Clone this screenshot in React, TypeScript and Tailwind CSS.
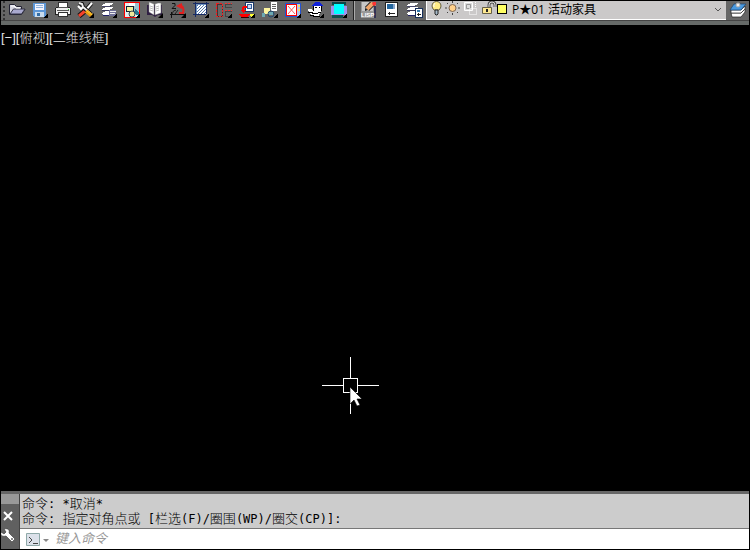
import type { ReactNode } from "react";

function Icon({ children }: { children: ReactNode }) {
  return (
    <svg width="23" height="18" viewBox="0 0 23 18" className="block shrink-0" shapeRendering="crispEdges" aria-hidden="true">
      {children}
    </svg>
  );
}

const Corner = () => <path d="M20 11v5h-5z" fill="#000" />;

function Sheets({ x = 0 }: { x?: number }) {
  return (
    <g transform={`translate(${x} 0)`}>
      <path d="M8 1h8v1h-1v1h-2v1H5V3h1V2h2z" fill="#fff" />
      <path d="M5 4h9v1H5z" fill="#446" />
      <path d="M8 5h8v1h-1v1h-2v1H5V7h1V6h2z" fill="#fff" />
      <path d="M5 8h9v1H5z" fill="#335" />
      <path d="M8 9h8v1h-1v1h-2v2H6v-1H5v-1h1v-1h2z" fill="#fff" />
      <path d="M6 13h8v1H6z" fill="#226" />
    </g>
  );
}

const tools: { name: string; art: ReactNode }[] = [
  {
    name: "打开",
    art: (
      <g shapeRendering="auto">
        <path d="M4.500 12.500v-10h5l2 2h5v3h3.500l-3.500 5z" fill="#d8d8e4" stroke="#223" />
        <path d="M5 12l3.500-5H20l-3.500 5z" fill="#a9a9cf" stroke="#334" />
        <path d="M6 4h3l2 2h4" fill="none" stroke="#fff" />
      </g>
    ),
  },
  {
    name: "保存",
    art: (
      <>
        <path d="M5 1h13v14H6l-1-1z" fill="#5c96d6" />
        <path d="M7 2h9v6H7z" fill="#f4f4ff" />
        <path d="M8 3h7v1H8zM8 5h7v1H8z" fill="#91b4dc" />
        <path d="M7 10h9v5H7z" fill="#c8dcef" />
        <path d="M9 11h3v3H9z" fill="#346ea6" />
        <Corner />
      </>
    ),
  },
  {
    name: "打印",
    art: (
      <>
        <path d="M7 0h10v6H7z" fill="#333" />
        <path d="M8 1h8v5H8z" fill="#fff" />
        <path d="M5 5h14v1h1v7H4V6h1z" fill="#222" />
        <path d="M5 6h14v6H5z" fill="#eee" />
        <path d="M7 5h10v1H7zM6 8h12v1H6z" fill="#555" />
        <path d="M7 10h10v5H7z" fill="#333" />
        <path d="M8 11h8v3H8z" fill="#fff" />
        <path d="M17 7h1v1h-1z" fill="#3b3" />
      </>
    ),
  },
  {
    name: "工具",
    art: (
      <g shapeRendering="auto">
        <path d="M17.500 1.500l-6 7" stroke="#111" strokeWidth="4" />
        <path d="M18 1l-6.500 7.500" stroke="#fff" strokeWidth="2" />
        <path d="M11 9l-6 5" stroke="#111" strokeWidth="5" />
        <path d="M11 9l-6 5" stroke="#f4422c" strokeWidth="3" />
        <path d="M5 1l3 1 1 3 8 7" fill="none" stroke="#111" strokeWidth="4" />
        <path d="M5 1l3 1 1 3 8 7" fill="none" stroke="#eee" strokeWidth="2" />
        <path d="M12 9l6 5" stroke="#e89a13" strokeWidth="4" />
        <path d="M13 9l5 4" stroke="#ffd633" />
        <path d="M4 4l3 3 2-2" fill="none" stroke="#fff" strokeWidth="2" />
        <Corner />
      </g>
    ),
  },
  {
    name: "图层",
    art: (
      <>
        <Sheets />
        <path d="M12 8h7v6h-7z" fill="#707098" />
        <path d="M13 9h6v1h-6zM13 11h5v1h-5z" fill="#eee" />
        <Corner />
      </>
    ),
  },
  {
    name: "图块",
    art: (
      <>
        <path d="M4.500 .5h15v15h-15z" fill="#e5efef" stroke="#f00" />
        <path d="M15 1h4v11l-6-4z" fill="#9cc4d0" />
        <path d="M6 4h8v6H6z" fill="#123" />
        <path d="M7 5h6v4H7z" fill="#f5f3a0" />
        <path d="M9 1h6v3H9z" fill="#fff" />
        <path d="M15 7l4 4v3l-5-3z" fill="#267b91" />
        <circle cx="12" cy="12" r="3" fill="#eee89a" stroke="#345" shapeRendering="auto" />
        <Corner />
      </>
    ),
  },
  {
    name: "图书",
    art: (
      <g shapeRendering="auto">
        <path d="M4 3v10h5l3 2 3-2h4V3z" fill="#302044" />
        <path d="M6 0l5 2v11l-5-3zM18 1h-3l-3 1v11l6-2z" fill="#fff" stroke="#777" strokeWidth=".5" />
        <path d="M7 4l3 1M7 6l3 1M7 8l3 1M13 5l3-1M13 7l3-1M13 9l3-1" stroke="#bbb" />
        <Corner />
      </g>
    ),
  },
  {
    name: "旋转",
    art: (
      <g shapeRendering="auto">
        <path d="M6 1.500h3v2l-3 3h4" fill="none" stroke="#111" />
        <path d="M13 3q6 1 4 8h-4" fill="none" stroke="#e22020" strokeWidth="2" />
        <path d="M10 4l6-3v6z" fill="#e22020" />
        <path d="M6 12q1-4 4-4M9 12l3-4" fill="none" stroke="#222" />
        <path d="M4 12.500h15M5.500 10v6" fill="none" stroke="#111" />
        <Corner />
      </g>
    ),
  },
  {
    name: "填充",
    art: (
      <>
        <path d="M7 2h10v10H7z" fill="#fff" />
        <path d="M7 5l3-3M7 8l6-6M7 11l9-9M9 12l8-8M12 12l5-5M15 12l2-2" stroke="#587baa" />
        <path d="M4 1.500h16M4 12.500h13M6.500 0v15M17.500 0v12" stroke="#172b64" />
        <path d="M7 2h10v1H7zM7 3h1v9H7z" fill="#6f94c0" />
        <Corner />
      </>
    ),
  },
  {
    name: "对齐",
    art: (
      <>
        <path d="M5.500 2.500h5v12h-5z" fill="none" stroke="#4c3030" />
        <path d="M4.500 1.500h6v13h-6z" fill="none" stroke="#f02020" strokeDasharray="2 1" />
        <path d="M19.500 2.500h-6v3h6M19.500 9.500h-6v5h4" fill="none" stroke="#444" />
        <path d="M13 1.500h7M13 8.500h7" stroke="#e33" strokeDasharray="2 1" />
        <Corner />
      </>
    ),
  },
  {
    name: "插入",
    art: (
      <>
        <path d="M10 0h9v10h-9z" fill="#193666" />
        <path d="M11 1h7v8h-7z" fill="#fff" />
        <path d="M12 2h5v5h-5z" fill="#355e9a" />
        <path d="M13 3h3v3h-3z" fill="#cbdaf6" />
        <path d="M12 4v2H9v2h2l-3 3-3-3h2V5l1-1z" fill="#f00" />
        <path d="M4 12h11l-2 3H6z" fill="#f00" />
        <path d="M6 15h8v1H6z" fill="#300" />
        <path d="M15 12h4l-3 3z" fill="#ff3" />
        <Corner />
      </>
    ),
  },
  {
    name: "特性",
    art: (
      <>
        <path d="M12 0h7v9h-7z" fill="#fff" />
        <path d="M12 0h1v9h-1zM14 2h4v1h-4zM14 4h4v1h-4zM14 6h4v1h-4z" fill="#666" />
        <path d="M6 6h6v6H6z" fill="#fff6a0" />
        <path d="M4 11h3v4H4zM11 10h4v3h-4z" fill="#6daab3" />
        <circle cx="13" cy="12" r="3" fill="none" stroke="#204b72" shapeRendering="auto" />
        <Corner />
      </>
    ),
  },
  {
    name: "裁剪",
    art: (
      <>
        <path d="M4.500 1.500h15v13h-15z" fill="#b4c6e8" stroke="#2453d0" />
        <path d="M5.500 2.500h10v11h-10z" fill="#fff" stroke="#f00" />
        <path d="M7 4l7 8M14 4l-7 8" stroke="#f15a5a" shapeRendering="auto" />
        <path d="M17 3h2v2h-2zM17 7h2v2h-2z" fill="#ffdc5a" />
        <Corner />
      </>
    ),
  },
  {
    name: "图层助手",
    art: (
      <>
        <path d="M11 0h5l3 4H8z" fill="#1022d8" />
        <path d="M9 4h9v5H9z" fill="#000" />
        <path d="M10 4h7v5h-7z" fill="#fff" />
        <path d="M11 5h2v1h-2zM15 5h1v1h-1z" fill="#000" />
        <path d="M4 7h3l2 2h8v2l-2 1v2H9l-4-3z" fill="#fff" />
        <path d="M4 10h5v1h5v-1h3v1h-3v1H8v-1H4zM6 13h4v1h6v1H9v-1H6z" fill="#000" />
        <Corner />
      </>
    ),
  },
  {
    name: "视口",
    art: (
      <>
        <path d="M5 0h14v3H5z" fill="#0d4748" />
        <path d="M4 4h16v9H4z" fill="#9e92ee" />
        <path d="M7 2h10v10H7z" fill="#0ff" />
        <path d="M5 13h11v3H5z" fill="#124b4c" />
        <Corner />
      </>
    ),
  },
];

const endTools: { name: string; art: ReactNode }[] = [
  {
    name: "LISP",
    art: (
      <>
        <path d="M4 0h15v16H4z" fill="#999" />
        <path d="M5 0h11v9H5z" fill="#c7c7c7" />
        <path d="M17 4h2v12h-2z" fill="#335" />
        <g shapeRendering="auto">
          <path d="M10 7l6-6" stroke="#222" strokeWidth="6" />
          <path d="M10 7l6-6" stroke="#eea56b" strokeWidth="4" />
          <path d="M16 0h3v3l-2 1-2-2z" fill="#f33" />
          <path d="M8 9l3-1-3-2z" fill="#222" />
        </g>
        <text x="4" y="15" className="fill-white font-['Liberation_Sans'] text-[6px] font-bold">LISP</text>
      </>
    ),
  },
  {
    name: "属性面板",
    art: (
      <>
        <path d="M5.500 .5h12v14h-12z" fill="#fff" stroke="#222" />
        <path d="M7 2h6v5H7z" fill="#24679e" />
        <path d="M13 2h2v5h-2z" fill="#8aa5ca" />
        <path d="M8 11h7v1H8zM9 10h1v3H9z" fill="#222" />
      </>
    ),
  },
  {
    name: "图层特性",
    art: (
      <>
        <Sheets x={-1} />
        <path d="M12.500 6.500h7v9h-7z" fill="#fff" stroke="#17305b" />
        <path d="M14 8h3v2h-3z" fill="#3477aa" />
        <path d="M14 12h4v1h-4zM15 11h1v3h-1z" fill="#222" />
      </>
    ),
  },
];

function ToolButton({ name, art }: { name: string; art: ReactNode }) {
  return (
    <button type="button" aria-label={name} className="w-[23px] shrink-0">
      <Icon>{art}</Icon>
    </button>
  );
}

function LayerCombo() {
  return (
    <div className="flex min-w-0 flex-1 items-start border-b border-l border-white bg-[#cbc9c9]">
      <svg width="81" height="18" viewBox="0 0 81 18" className="block shrink-0" aria-hidden="true">
        <path d="M7 9q-2-2-2-4c0-6 9-6 9 0q0 2-2 4z" fill="#ffec85" stroke="#655f45" />
        <path d="M8 2q-2 2-1 4" fill="none" stroke="#fff" />
        <path d="M8 9h3v4l-1 1H9l-1-1z" fill="#a7bbca" stroke="#222" />
        <circle cx="25.500" cy="7" r="3.500" fill="#ffd08a" stroke="#806650" />
        <path d="M25.500 0v2M25.500 12v2M18 7h2M31 7h2M20 2l1 1M30 11l1 1M20 12l1-1M30 3l1-1" stroke="#444" />
        <path d="M37.500 1.500h8v8h-8z" fill="#ddd" stroke="#fff" />
        <path d="M39.500 3.500h4v4h-4z" fill="none" stroke="#999" />
        <path d="M42.500 7.500h7v6h-7zM48.500 1v6" fill="none" stroke="#fff" strokeDasharray="1 1" />
        <path d="M62 7V4q0-3 3-3 3 0 3 3v2" fill="none" stroke="#555" strokeWidth="3" />
        <path d="M62 7V4q0-3 3-3 3 0 3 3v2" fill="none" stroke="#ddd" />
        <path d="M55.500 6.500h9v6h-9z" fill="#ffe991" stroke="#676148" />
        <path d="M59 8h2v3h-2z" fill="#222" />
        <path d="M70.500 3.500h9v9h-9z" fill="#ffff64" stroke="#000" shapeRendering="crispEdges" />
      </svg>
      <div className="relative min-w-0 flex-1">
        <select aria-label="图层" className="block h-[17px] w-full appearance-none bg-transparent pl-1 font-['Open_Sans','Noto_Sans_CJK_SC',sans-serif] text-[12px] leading-[17px] text-black outline-none">
          <option>P★01 活动家具</option>
        </select>
        <svg width="8" height="6" viewBox="0 0 8 6" className="pointer-events-none absolute right-1 top-1.5" aria-hidden="true">
          <path d="M1 1l3 3 3-3" fill="none" stroke="#555" />
        </svg>
      </div>
    </div>
  );
}

function Toolbar() {
  return (
    <header className="border-b-4 border-[#666a68] bg-[#666]">
      <div className="flex border-b border-[#444]">
        <div className="w-1 shrink-0 border-r-2 border-dotted border-[#333]" />
        {tools.map((tool) => (
          <ToolButton key={tool.name} {...tool} />
        ))}
        <div className="ml-[3px] mr-0.5 w-0.5 shrink-0 border-l border-r border-l-[#222] border-r-[#aaa]" />
        {endTools.map((tool) => (
          <ToolButton key={tool.name} {...tool} />
        ))}
        <LayerCombo />
        <button type="button" aria-label="图层状态" className="w-[23px] shrink-0">
          <Icon>
            <g shapeRendering="auto">
              <path d="M5 11h10l4-4v3l-4 5H6z" fill="#fff" stroke="#222" strokeWidth=".7" />
              <path d="M5 8h10l4-4v3l-4 4H5z" fill="#fff" stroke="#222" strokeWidth=".7" />
              <path d="M8 2h12l-5 6H4z" fill="#4a99df" stroke="#194370" strokeWidth=".7" />
              <circle cx="12" cy="3" r="2" fill="#eee" stroke="#aaa" />
            </g>
          </Icon>
        </button>
      </div>
    </header>
  );
}

function Drawing() {
  return (
    <main className="relative flex-1 bg-black">
      <div className="flex pt-1 font-['Liberation_Sans','Noto_Sans_CJK_SC',sans-serif] text-[13px] font-light leading-[18px] text-[#e4e4e4]">
        <button type="button">[−]</button>
        <button type="button">[俯视]</button>
        <button type="button">[二维线框]</button>
      </div>
      <svg width="57" height="57" viewBox="0 0 57 57" className="absolute left-[321px] top-[332px]" aria-hidden="true">
        <path d="M28.500 0v21M28.500 46v11M0 28.500h21M36 28.500h21M21.500 21.500h14v14h-14z" fill="none" stroke="#fff" shapeRendering="crispEdges" />
        <path d="M28 30v17l4-4 3 6 3-1-3-6h5z" fill="#fff" stroke="#000" strokeWidth=".6" />
      </svg>
    </main>
  );
}

const han = "text-[13px] font-light";

function CommandWindow() {
  return (
    <footer className="flex border-t-[3px] border-[#666] bg-[#ccc]">
      <div className="flex w-[18px] shrink-0 flex-col bg-[#606060]">
        <div className="h-[10px] bg-[#999]" />
        <button type="button" aria-label="关闭" className="flex h-[23px] items-center pl-0.5">
          <svg width="10" height="10" viewBox="0 0 10 10" aria-hidden="true">
            <path d="M1 1l8 8M9 1L1 9" stroke="#fff" strokeWidth="2" />
          </svg>
        </button>
        <button type="button" aria-label="自定义" className="flex flex-1 items-start">
          <svg width="15" height="17" viewBox="0 0 15 17" aria-hidden="true">
            <path d="M0 5l3 2 2-2-2-3c4-1 6 1 5 4l6 6-3 3-6-6c-4 1-6-1-5-4z" fill="#fff" stroke="#333" strokeWidth=".6" />
            <circle cx="11" cy="12" r="1" fill="#666" />
          </svg>
        </button>
      </div>
      <div className="min-w-0 flex-1 border-l border-[#444]">
        <div className="pb-0.5 pl-0.5 pt-0.5 font-['DejaVu_Sans_Mono','Noto_Sans_CJK_SC',monospace] text-[12px] leading-[15px] text-black">
          <p className="h-[15px] whitespace-pre"><span className={han}>命令</span>: *<span className={han}>取消</span>*</p>
          <p className="h-[15px] whitespace-pre"><span className={han}>命令</span>: <span className={han}>指定对角点或</span> [<span className={han}>栏选</span>(F)/<span className={han}>圈围</span>(WP)/<span className={han}>圈交</span>(CP)]:</p>
        </div>
        <form className="flex h-[21px] items-center border-t border-[#777] bg-white pl-1.5" onSubmit={(e) => e.preventDefault()}>
          <button type="button" aria-label="最近使用的命令" className="shrink-0">
            <svg width="25" height="15" viewBox="0 0 25 15" className="block" aria-hidden="true">
              <path d="M.5 1.500h13v12H.5z" fill="#dce1ea" stroke="#8fa9a9" />
              <path d="M3 5l3 3-3 3M7 11.500h5" fill="none" stroke="#444" />
              <path d="M17 7h6l-3 3z" fill="#888" />
            </svg>
          </button>
          <input aria-label="命令" placeholder="键入命令" className="ml-1 h-[18px] min-w-0 flex-1 bg-transparent font-['DejaVu_Sans_Mono','Noto_Sans_CJK_SC',monospace] text-[13px] italic text-black outline-none placeholder:text-[#999]" />
        </form>
      </div>
    </footer>
  );
}

export default function App() {
  return (
    <div className="flex min-h-screen flex-col border border-black bg-black">
      <Toolbar />
      <Drawing />
      <CommandWindow />
    </div>
  );
}
